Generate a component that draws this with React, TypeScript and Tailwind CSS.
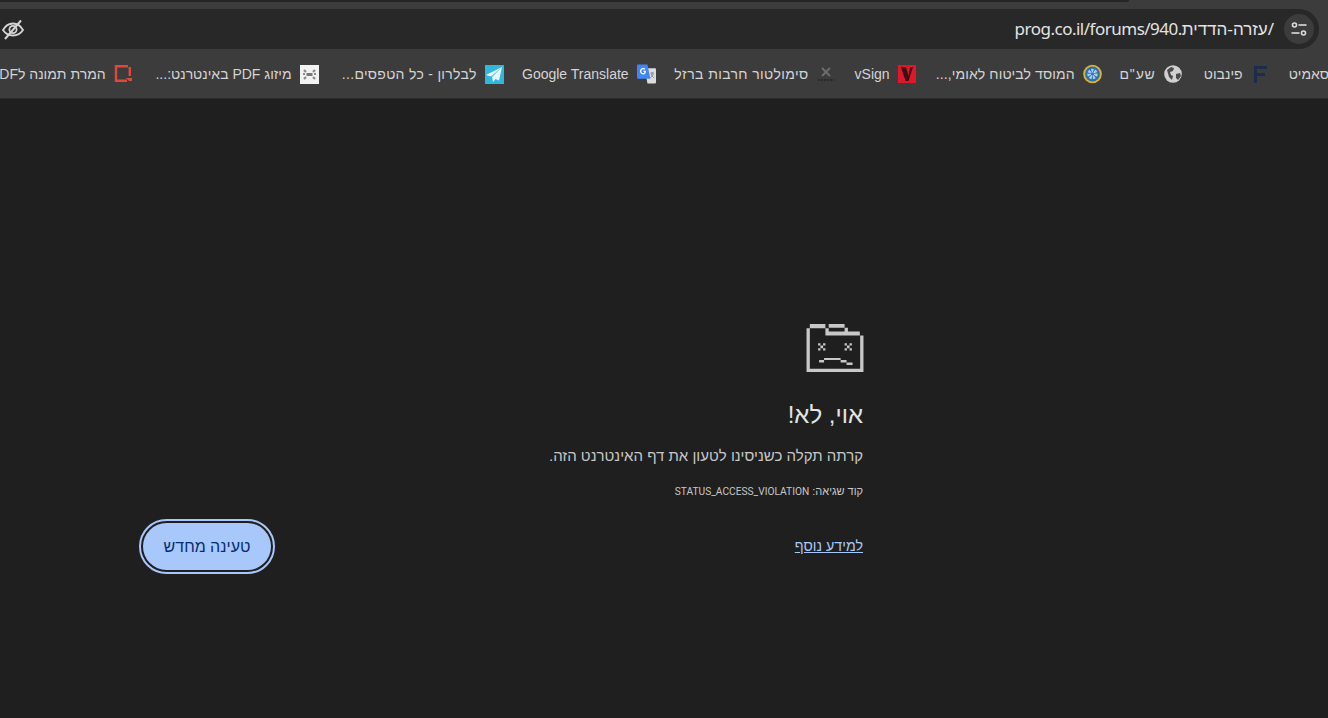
import React from "react";

const Eye = () => (
  <svg width="24" height="24" viewBox="0 0 24 24" fill="none" stroke="#d4d4d4" strokeWidth="1.8">
    <path d="M2 13c2.500-4.500 6-6.500 10-6.500S19.500 8.500 22 13c-2.500 3.800-6 5.500-10 5.500S4.500 16.800 2 13z" />
    <circle cx="12" cy="12.500" r="3.600" />
    <path d="M20 3.500 4 22" strokeWidth="2" />
  </svg>
);

const Tune = () => (
  <svg width="16" height="16" viewBox="0 0 16 16" fill="none" stroke="#dcdcdc" strokeWidth="1.600">
    <circle cx="3.500" cy="4" r="2" />
    <path d="M7.500 4H15.500" />
    <circle cx="12.500" cy="12" r="2" />
    <path d="M0.500 12h8" />
  </svg>
);

const FavF = () => (
  <svg width="18" height="18" viewBox="0 0 18 18"><path d="M3 1h13v3H6v4h8v3H6v7H3z" fill="#1c2c4c" /></svg>
);
const FavGlobe = () => (
  <svg width="18" height="18" viewBox="0 0 18 18">
    <circle cx="9" cy="9" r="8.800" fill="#d0d0d0" />
    <path d="M3 5l4-3 3 1-1 3-3 1 1 3 2 1-1 4-3-3zM12 9l4-1 1 3-3 4-2-2z" fill="#4a4a4a" />
  </svg>
);
const FavSeal = () => (
  <svg width="20" height="20" viewBox="0 0 20 20">
    <circle cx="10" cy="10" r="9.800" fill="#d6b63a" />
    <circle cx="10" cy="10" r="7.800" fill="#2f6fb0" />
    <circle cx="10" cy="10" r="3.500" fill="none" stroke="#a8cdee" strokeWidth="4" strokeDasharray="2 1" />
  </svg>
);
const FavV = () => (
  <svg width="18" height="18" viewBox="0 0 18 18">
    <rect width="18" height="18" fill="#e0162b" />
    <path d="M3 2h5l2.500 9L12 2h3l-4.500 14H7.500z" fill="#3a1015" />
  </svg>
);
const FavSim = () => (
  <svg width="18" height="18" viewBox="0 0 18 18">
    <path d="M5 3l8 8M13 3 5 11" stroke="#6e6e6e" strokeWidth="1.800" />
    <path d="M1 15h16" stroke="#2a2a2a" strokeWidth="2" strokeDasharray="2 1" />
  </svg>
);
const FavTranslate = () => (
  <svg width="20" height="20" viewBox="0 0 20 20">
    <path d="M8 4h11a1 1 0 0 1 1 1v14a1 1 0 0 1-1 1H11z" fill="#dcdcdc" />
    <path d="M1 0h10l3 15H1a1 1 0 0 1-1-1V1a1 1 0 0 1 1-1z" fill="#4285f4" />
    <path d="M9.500 6.500H6.800v1.400h1.300c-.3.800-1 1.200-1.600 1.200a2 2 0 0 1 0-4c.5 0 1 .2 1.300.5l1-1a3.400 3.400 0 1 0-2.300 5.900c2 0 3.200-1.500 3-4z" fill="#fff" />
    <path d="M14 9h4M16 8v2M15 10c.5 2 1.500 3 3 4M17 10c-.5 2-1.500 3-3 4" stroke="#8a8a8a" strokeWidth="1" fill="none" />
  </svg>
);
const FavPlane = () => (
  <svg width="19" height="19" viewBox="0 0 19 19">
    <rect width="19" height="19" fill="#31b7dd" />
    <path d="M17 2 1 10l5 1.500zM17 2 7 12l1 5 2.500-3 3.500 1.500z" fill="#e8f7fc" />
  </svg>
);
const FavPdf = () => (
  <svg width="19" height="19" viewBox="0 0 19 19">
    <rect width="19" height="19" fill="#f2f2f2" />
    <path d="M4 5l2 2M15 5l-2 2M3 9h2M14 9h2M4 14l2-2M15 14l-2-2" stroke="#8a8a8a" strokeWidth="2.200" />
    <rect x="6.500" y="8" width="6" height="3" fill="#777" />
  </svg>
);
const FavRed = () => (
  <svg width="19" height="18" viewBox="0 0 19 18" fill="none">
    <path d="M14 1.200H2v14.600h11M15.800 2v9" stroke="#e2483a" strokeWidth="2.400" />
    <path d="M12 13h6v3h-3z" fill="#e2483a" />
  </svg>
);

const bookmarks: { t: string; i: React.ReactNode; c: string }[] = [
  { t: "סאמיט", i: null, c: "" },
  { t: "פינבוט", i: <FavF />, c: "w-[41px]" },
  { t: 'שע"ם', i: <FavGlobe />, c: "w-[35px] tracking-[0.8px]" },
  { t: "המוסד לביטוח לאומי,...", i: <FavSeal />, c: "w-[139px] tracking-[0.1px]" },
  { t: "vSign", i: <FavV />, c: "w-[35px]" },
  { t: "סימולטור חרבות ברזל", i: <FavSim />, c: "w-[134px] tracking-[0.37px]" },
  { t: "Google Translate", i: <FavTranslate />, c: "w-[106px]" },
  { t: "לבלרון - כל הטפסים...", i: <FavPlane />, c: "w-[139px] tracking-[0.3px]" },
  { t: "מיזוג PDF באינטרנט:...", i: <FavPdf />, c: "w-[140px]" },
  { t: "המרת תמונה לPDF", i: <FavRed />, c: "" },
];

const Folder = () => (
  <svg className="w-[58px] h-[48px] mr-[-1px]" viewBox="80 42 172 145" fill="#c8c8c8">
    <path d="M80 55h10v122h152V77h10v110H80z" />
    <path d="M90 42h47v13H90zM137 55h10v10h48V53h10v12h36v12H137zM147 42h48v11h-48z" />
    <path d="M115 100h7v7h-7zM130 100h7v7h-7zM122 107h8v8h-8zM115 115h7v7h-7zM130 115h7v7h-7z" />
    <path d="M195 100h7v7h-7zM210 100h7v7h-7zM202 107h8v8h-8zM195 115h7v7h-7zM210 115h7v7h-7z" />
    <path d="M118 151h15v7h-15zM133 145h50v6h-50zM183 151h18v7h-18zM201 158h18v8h-18z" />
  </svg>
);

export default function App() {
  return (
    <div dir="rtl" className="h-[718px] w-[1328px] overflow-hidden bg-[#1f1f1f] flex flex-col font-['Liberation_Sans','Open_Sans',sans-serif]">
      <div className="h-[49px] shrink-0 bg-[#3c3c3c]">
        <div className="h-[2px] mr-[199px] bg-[#252525] rounded-br-[2px]" />
        <div className="h-[40px] mt-[7px] mr-[9px] bg-[#282828] rounded-r-[20px] flex items-center pr-[5px]">
          <div className="w-[30px] h-[30px] rounded-full bg-[#3c3c3c] flex items-center justify-center shrink-0">
            <Tune />
          </div>
          <div dir="ltr" className="mr-[10px] text-[17px] text-[#e3e3e3] whitespace-nowrap font-['Noto_Sans','Liberation_Sans',sans-serif]">
            <span className="tracking-[-0.5px]">prog.co.il/forums/940.</span><span dir="rtl" className="[unicode-bidi:isolate] font-['Liberation_Sans']">עזרה-הדדית</span><span>/</span>
          </div>
          <div className="mr-auto ml-[1px] flex items-center"><Eye /></div>
        </div>
      </div>
      <div className="h-[50px] shrink-0 pt-[1px] bg-[#3c3c3c] border-b border-[#2a2a2a] flex items-center gap-[19px] overflow-hidden text-[14px] text-[#d4d4d4] whitespace-nowrap">
        {bookmarks.map((b, n) => (
          <div key={n} className={`flex items-center gap-[8px] shrink-0 ${n === 0 ? "mr-[-1px]" : ""}`}>
            {b.i && <span className="flex items-center justify-center w-[19px] h-[19px]">{b.i}</span>}
            <span className={`block ${b.c}`}>{b.t}</span>
          </div>
        ))}
      </div>
      <div className="flex-1 flex">
        <div className="w-[720px] mr-[465px] pt-[225px]">
          <Folder />
          <h1 className="mt-[27px] text-[24px] leading-[32px] text-[#e3e3e3] font-normal">אוי, לא!</h1>
          <p className="mt-[13px] text-[15px] leading-[24px] text-[#c7c7c7]">קרתה תקלה כשניסינו לטעון את דף האינטרנט הזה.</p>
          <p className="mt-[15px] text-[11px] leading-[16px] text-[#c7c7c7]">קוד שגיאה: <span className="font-['Roboto'] text-[10.200px]">STATUS_ACCESS_VIOLATION</span></p>
          <div className="mt-[23px] flex items-center justify-between">
            <a className="text-[14.250px] text-[#a8c7fa] underline">למידע נוסף</a>
            <button className="w-[128px] h-[47px] rounded-full bg-[#a8c7fa] text-[#062e6f] text-[16px] font-medium outline-2 outline-offset-2 outline-[#a8c7fa] border-0">טעינה מחדש</button>
          </div>
        </div>
      </div>
    </div>
  );
}
